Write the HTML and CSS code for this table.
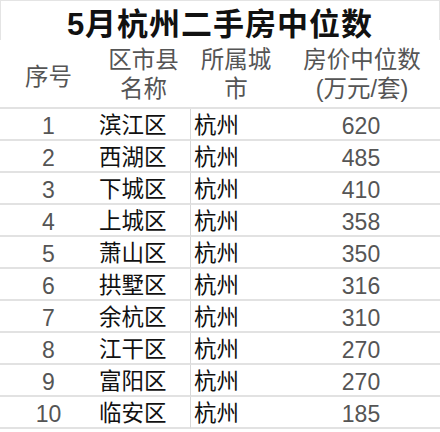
FILE: index.html
```html
<!DOCTYPE html>
<html lang="zh-CN">
<head>
<meta charset="utf-8">
<title>5月杭州二手房中位数</title>
<link rel="stylesheet" href="styles.css">
</head>
<body>
<div class="sheet">
  <div class="title">5月杭州二手房中位数</div>
  <div class="grid">
    <div class="hd c1">序号</div>
    <div class="hd c2">区市县<br>名称</div>
    <div class="hd c3">所属城<br>市</div>
    <div class="hd c4">房价中位数<br>(万元/套)</div>

    <div class="cell num">1</div><div class="cell name">滨江区</div><div class="cell city">杭州</div><div class="cell num">620</div>
    <div class="cell num">2</div><div class="cell name">西湖区</div><div class="cell city">杭州</div><div class="cell num">485</div>
    <div class="cell num">3</div><div class="cell name">下城区</div><div class="cell city">杭州</div><div class="cell num">410</div>
    <div class="cell num">4</div><div class="cell name">上城区</div><div class="cell city">杭州</div><div class="cell num">358</div>
    <div class="cell num">5</div><div class="cell name">萧山区</div><div class="cell city">杭州</div><div class="cell num">350</div>
    <div class="cell num">6</div><div class="cell name">拱墅区</div><div class="cell city">杭州</div><div class="cell num">316</div>
    <div class="cell num">7</div><div class="cell name">余杭区</div><div class="cell city">杭州</div><div class="cell num">310</div>
    <div class="cell num">8</div><div class="cell name">江干区</div><div class="cell city">杭州</div><div class="cell num">270</div>
    <div class="cell num">9</div><div class="cell name">富阳区</div><div class="cell city">杭州</div><div class="cell num">270</div>
    <div class="cell num">10</div><div class="cell name">临安区</div><div class="cell city">杭州</div><div class="cell num">185</div>
  </div>
</div>
</body>
</html>
```

FILE: styles.css
```css
html, body {
  margin: 0;
  padding: 0;
  background: #ffffff;
}
body {
  font-family: "Liberation Sans", "Noto Sans CJK SC", sans-serif;
  width: 440px;
  height: 432px;
  overflow: hidden;
}
.sheet {
  width: 440px;
}
.title {
  box-sizing: border-box;
  height: 40px;
  border: 1px solid #e4e4e4;
  border-bottom: none;
  text-align: center;
  font-family: "Liberation Sans", "Noto Sans CJK SC", sans-serif;
  font-weight: bold;
  font-size: 31px;
  line-height: 48px;
  letter-spacing: 1px;
  color: #111111;
}
.grid {
  display: grid;
  grid-template-columns: 97px 93px 92px 158px;
}
.hd {
  box-sizing: border-box;
  height: 69px;
  border-bottom: 2px solid #e2e2e2;
  display: flex;
  align-items: center;
  justify-content: center;
  text-align: center;
  color: #555555;
  font-size: 23.5px;
  line-height: 29px;
  padding-top: 3px;
}
.hd.c1 {
  padding-top: 8px;
}
.hd.c4 {
  padding-left: 2px;
}
.cell {
  box-sizing: border-box;
  height: 32px;
  border-bottom: 2px solid #e2e2e2;
  display: flex;
  align-items: center;
  font-size: 22.5px;
  line-height: 30px;
  padding-top: 4px;
}
.num {
  justify-content: center;
  color: #555555;
  font-size: 23px;
}
.name {
  padding-left: 2px;
  color: #111111;
}
.city {
  padding-left: 3px;
  color: #111111;
  border-left: 1px solid #d8d8d8;
}
```
